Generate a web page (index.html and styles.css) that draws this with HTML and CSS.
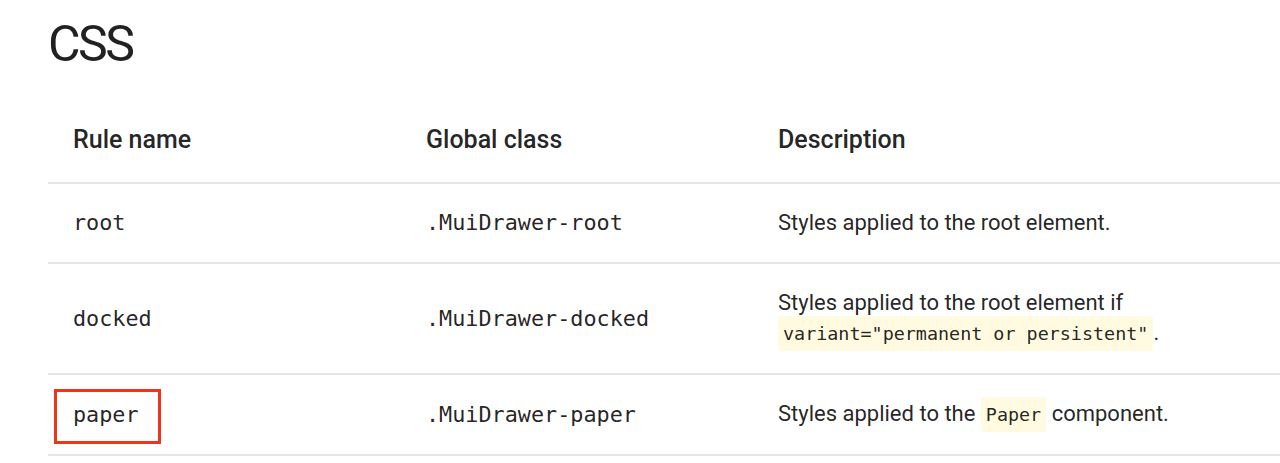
FILE: index.html
```html
<!DOCTYPE html>
<html lang="en">
<head>
<meta charset="utf-8">
<title>CSS</title>
<link rel="stylesheet" href="styles.css">
</head>
<body>
<main class="page">
  <h2 class="title">CSS</h2>
  <table class="api-table">
    <thead>
      <tr>
        <th class="col-name">Rule name</th>
        <th class="col-class">Global class</th>
        <th class="col-desc">Description</th>
      </tr>
    </thead>
    <tbody>
      <tr>
        <td class="mono">root</td>
        <td class="mono">.MuiDrawer-root</td>
        <td>Styles applied to the root element.</td>
      </tr>
      <tr>
        <td class="mono">docked</td>
        <td class="mono">.MuiDrawer-docked</td>
        <td>Styles applied to the root element if<br><code class="inline-code">variant="permanent or persistent"</code>.</td>
      </tr>
      <tr>
        <td class="mono"><span class="highlight">paper</span></td>
        <td class="mono">.MuiDrawer-paper</td>
        <td>Styles applied to the <code class="inline-code">Paper</code> component.</td>
      </tr>
    </tbody>
  </table>
</main>
</body>
</html>
```

FILE: styles.css
```css
html, body {
  margin: 0;
  padding: 0;
  background: #ffffff;
  overflow: hidden;
}

body {
  font-family: Roboto, "Liberation Sans", sans-serif;
  color: rgba(0, 0, 0, 0.87);
}

.page {
  padding: 13px 0 0 48px;
}

.title {
  margin: 0 0 24px 0;
  font-size: 50px;
  font-weight: 400;
  line-height: 62px;
  letter-spacing: -2.5px;
}

.api-table {
  border-collapse: collapse;
  width: 1232px;
  table-layout: fixed;
}

.api-table th,
.api-table td {
  box-sizing: border-box;
}

.col-name { width: 353px; }
.col-class { width: 352px; }

.api-table th,
.api-table td {
  text-align: left;
  vertical-align: middle;
  padding: 24px 24px 24px 25px;
  border-bottom: 2px solid #e5e5e5;
}

.api-table th {
  font-size: 25px;
  font-weight: 500;
  line-height: 36px;
  padding-top: 23px;
}

.api-table td {
  font-size: 22px;
  font-weight: 400;
  line-height: 30px;
}

.api-table td.mono {
  font-family: "DejaVu Sans Mono", "Liberation Mono", monospace;
  font-size: 21.8px;
}

.inline-code {
  font-family: "DejaVu Sans Mono", "Liberation Mono", monospace;
  font-size: 18.4px;
  background: #fffae0;
  padding: 7px 5px;
  border-radius: 3px;
}

.highlight {
  position: relative;
}

.highlight::after {
  content: "";
  position: absolute;
  left: -19px;
  right: -22px;
  top: -13px;
  bottom: -17px;
  border: 3.5px solid #ef3419;
}
```
